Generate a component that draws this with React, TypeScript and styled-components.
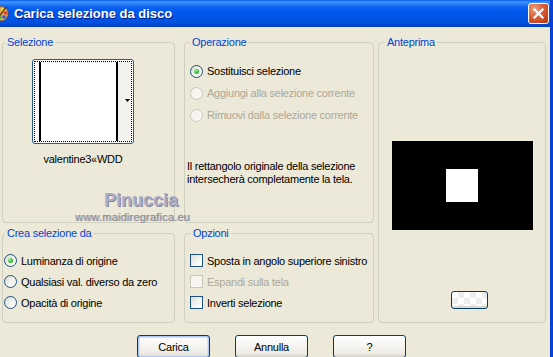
import React from 'react';
import styled, { createGlobalStyle } from 'styled-components';

const GlobalStyle = createGlobalStyle`
  html, body { margin: 0; padding: 0; background: #ECE9D8; }
  body { font-family: "Liberation Sans", Arial, sans-serif; }
`;

const Window = styled.div`
  width: 553px;
  height: 357px;
  box-sizing: border-box;
  border-right: 3px solid #0A3FD4;
  background: #ECE9D8;
  display: flex;
  flex-direction: column;
  overflow: hidden;
  font-family: "Liberation Sans", Arial, sans-serif;
  font-size: 11px;
  letter-spacing: -0.25px;
  color: #000;
`;

const TitleBar = styled.div`
  height: 27px;
  flex: none;
  display: flex;
  align-items: center;
  padding-right: 1px;
  background: linear-gradient(
    180deg,
    #0A5BE8 0px,
    #3D95FF 2px,
    #2A7DF7 4px,
    #0E63EE 7px,
    #0058EE 11px,
    #0055E5 18px,
    #0053E0 22px,
    #0048D0 25px,
    #003CB8 27px
  );
`;

const AppIcon = styled.svg`
  width: 16px;
  height: 18px;
  margin-left: -7px;
  flex: none;
`;

const Title = styled.span`
  flex: 1;
  margin-left: 5px;
  color: #fff;
  font: bold 13px "Liberation Sans", Arial, sans-serif;
  letter-spacing: 0;
  text-shadow: 1px 1px 0 #0A1D8A;
`;

const CloseButton = styled.div`
  width: 21px;
  height: 21px;
  box-sizing: border-box;
  border: 1px solid #fff;
  border-radius: 3px;
  background: radial-gradient(circle at 30% 25%, #F0A080 0%, #E06A42 35%, #C8431D 75%, #B0350F 100%);
  display: flex;
  align-items: center;
  justify-content: center;
`;

const Body = styled.div`
  position: relative;
  flex: 1;
  padding: 9px 0 0 2px;
  display: flex;
  flex-direction: column;
`;

const Panels = styled.div`
  display: grid;
  grid-template-columns: 173px 9px 190px 4px 168px;
  grid-template-rows: 187px 96px;
  row-gap: 4px;
  grid-template-areas:
    "sel . op . prev"
    "crea . opz . prev";
`;

const GroupBox = styled.fieldset<{ $area: string }>`
  grid-area: ${p => p.$area};
  margin: 0;
  padding: 0;
  min-width: 0;
  box-sizing: border-box;
  border: 1px solid #D0D0BF;
  border-radius: 4px;
`;

const Legend = styled.legend<{ $indent: number }>`
  margin-left: ${p => p.$indent}px;
  padding: 0 2px;
  color: #0046D5;
  font-size: 11px;
  line-height: 13px;
`;

const SelectionContent = styled.div`
  padding: 10px 0 0 29px;
`;

const ThumbColumn = styled.div`
  width: 102px;
  display: flex;
  flex-direction: column;
  align-items: center;
  gap: 9px;
`;

const Thumb = styled.div`
  width: 102px;
  height: 85px;
  box-sizing: border-box;
  border: 1px solid #2A5C8F;
  border-radius: 3px;
  padding: 1px;
  background: #fff;
`;

const ThumbFocus = styled.div`
  height: 100%;
  box-sizing: border-box;
  border: 1px dotted #000;
  display: flex;
`;

const ThumbCaption = styled.span`
  line-height: 13px;
  white-space: nowrap;
`;

const OptionList = styled.div<{ $top: number; $left: number }>`
  padding: ${p => p.$top}px 0 0 ${p => p.$left}px;
  display: flex;
  flex-direction: column;
`;

const OptionRow = styled.div<{ $disabled?: boolean; $height: number }>`
  height: ${p => p.$height}px;
  display: flex;
  align-items: center;
  gap: 4px;
  white-space: nowrap;
  color: ${p => (p.$disabled ? '#ACA899' : '#000')};
`;

const RadioMark = styled.span<{ $checked?: boolean; $disabled?: boolean }>`
  width: 13px;
  height: 13px;
  flex: none;
  box-sizing: border-box;
  border-radius: 50%;
  border: 1px solid ${p => (p.$disabled ? '#CAC8BB' : '#1C5180')};
  background: ${p =>
    p.$disabled ? '#F6F5EF' : 'linear-gradient(135deg, #DCDCD7 0%, #F4F4F0 55%, #FFFFFF 100%)'};
  display: flex;
  align-items: center;
  justify-content: center;
  &::after {
    content: ${p => (p.$checked ? "''" : 'none')};
    width: 5px;
    height: 5px;
    border-radius: 50%;
    background: radial-gradient(circle at 35% 35%, #A6F0A2 0%, #3FC03B 50%, #21A121 100%);
  }
`;

const CheckMark = styled.span<{ $disabled?: boolean }>`
  width: 13px;
  height: 13px;
  flex: none;
  box-sizing: border-box;
  border: 1px solid ${p => (p.$disabled ? '#CAC8BB' : '#1C5180')};
  background: ${p =>
    p.$disabled ? '#F6F5EF' : 'linear-gradient(135deg, #DCDCD7 0%, #F4F4F0 55%, #FFFFFF 100%)'};
`;

const Note = styled.p`
  margin: 34px 0 0 2px;
  line-height: 13px;
  white-space: nowrap;
`;

const PreviewContent = styled.div`
  padding-top: 92px;
  display: flex;
  flex-direction: column;
  align-items: center;
`;

const PreviewCanvas = styled.div`
  width: 141px;
  height: 89px;
  background: #000;
  display: flex;
  align-items: center;
  justify-content: center;
`;

const PreviewSelection = styled.div`
  width: 32px;
  height: 33px;
  background: #fff;
`;

const SmallButton = styled.div`
  margin: 61px 0 0 15px;
  width: 37px;
  height: 18px;
  box-sizing: border-box;
  border: 1px solid #003C74;
  border-radius: 3px;
  background:
    repeating-conic-gradient(#EDEDED 0% 25%, #FFFFFF 0% 50%) 0 0 / 12px 12px;
  box-shadow: inset 0 -2px 0 #DCD8CC;
`;

const ButtonRow = styled.div`
  display: flex;
  gap: 25px;
  margin-top: 12px;
  padding-left: 135px;
`;

const DialogButton = styled.button<{ $default?: boolean }>`
  width: 73px;
  height: 23px;
  flex: none;
  box-sizing: border-box;
  padding: 0;
  border: 1px solid #003C74;
  border-radius: 3px;
  background: linear-gradient(180deg, #FFFFFF 0%, #F6F5F1 45%, #ECEAE2 85%, #D6D0C5 100%);
  font: 11px "Liberation Sans", Arial, sans-serif;
  letter-spacing: -0.25px;
  color: #000;
  box-shadow: ${p =>
    p.$default ? 'inset 0 0 0 1px #B0C8F2, inset 0 0 0 2px #D2E0F8' : 'none'};
`;

const Watermark = styled.div`
  position: absolute;
  left: 75px;
  top: 164px;
  display: flex;
  flex-direction: column;
  pointer-events: none;
`;

const WatermarkName = styled.span`
  margin-left: 29px;
  font: bold 18px "Liberation Sans", Arial, sans-serif;
  line-height: 18px;
  letter-spacing: 0;
  color: #ADADC6;
  text-shadow: 1px 1px 0 #84849C;
`;

const WatermarkUrl = styled.span`
  margin-top: 3px;
  font: 11px "Liberation Sans", Arial, sans-serif;
  line-height: 11px;
  letter-spacing: 0.2px;
  color: #8E8E96;
  text-shadow: 1px 0 0 #B4B4BC;
`;

type Option = { label: string; checked?: boolean; disabled?: boolean };

const operations: Option[] = [
  { label: 'Sostituisci selezione', checked: true },
  { label: 'Aggiungi alla selezione corrente', disabled: true },
  { label: 'Rimuovi dalla selezione corrente', disabled: true },
];

const sources: Option[] = [
  { label: 'Luminanza di origine', checked: true },
  { label: 'Qualsiasi val. diverso da zero' },
  { label: 'Opacità di origine' },
];

const options: Option[] = [
  { label: 'Sposta in angolo superiore sinistro' },
  { label: 'Espandi sulla tela', disabled: true },
  { label: 'Inverti selezione' },
];

export default function App() {
  return (
    <>
      <GlobalStyle />
      <Window>
        <TitleBar>
          <AppIcon viewBox="0 0 16 18">
            <path d="M2 4 C6 0 14 1 15 7 C16 12 12 16 8 16 C5 16 6 13 4 13 C1 13 -1 8 2 4 Z" fill="#E2A94E" stroke="#7A4A1C" strokeWidth="0.8" />
            <circle cx="10" cy="4.5" r="1.8" fill="#F5E02A" />
            <circle cx="12.5" cy="8" r="1.8" fill="#E23A3A" />
            <circle cx="11" cy="12" r="1.8" fill="#2D5BE0" />
            <circle cx="7" cy="12.5" r="1.5" fill="#3FAE3A" />
            <path d="M3 16 L13 2" stroke="#5A3414" strokeWidth="1.4" />
          </AppIcon>
          <Title>Carica selezione da disco</Title>
          <CloseButton>
            <svg width="13" height="13" viewBox="0 0 13 13">
              <path d="M2.5 2.5 L10.5 10.5 M10.5 2.5 L2.5 10.5" stroke="#fff" strokeWidth="2.2" strokeLinecap="square" />
            </svg>
          </CloseButton>
        </TitleBar>
        <Body>
          <Panels>
            <GroupBox $area="sel">
              <Legend $indent={2}>Selezione</Legend>
              <SelectionContent>
                <ThumbColumn>
                  <Thumb>
                    <ThumbFocus>
                      <svg width="96" height="79" viewBox="0 0 96 79">
                        <rect x="0" y="0" width="96" height="79" fill="#fff" />
                        <rect x="4" y="0" width="2" height="79" fill="#000" />
                        <rect x="81" y="0" width="2" height="79" fill="#000" />
                        <rect x="83" y="0" width="13" height="79" fill="#F3F2EC" />
                        <path d="M90 37 L95 37 L92.5 40 Z" fill="#000" />
                      </svg>
                    </ThumbFocus>
                  </Thumb>
                  <ThumbCaption>valentine3«WDD</ThumbCaption>
                </ThumbColumn>
              </SelectionContent>
            </GroupBox>

            <GroupBox $area="op">
              <Legend $indent={5}>Operazione</Legend>
              <OptionList $top={11} $left={5}>
                {operations.map(o => (
                  <OptionRow key={o.label} $height={22} $disabled={o.disabled}>
                    <RadioMark $checked={o.checked} $disabled={o.disabled} />
                    {o.label}
                  </OptionRow>
                ))}
              </OptionList>
              <Note>
                Il rettangolo originale della selezione
                <br />
                intersecherà completamente la tela.
              </Note>
            </GroupBox>

            <GroupBox $area="prev">
              <Legend $indent={6}>Anteprima</Legend>
              <PreviewContent>
                <PreviewCanvas>
                  <PreviewSelection />
                </PreviewCanvas>
                <SmallButton />
              </PreviewContent>
            </GroupBox>

            <GroupBox $area="crea">
              <Legend $indent={2}>Crea selezione da</Legend>
              <OptionList $top={10} $left={1}>
                {sources.map(o => (
                  <OptionRow key={o.label} $height={21} $disabled={o.disabled}>
                    <RadioMark $checked={o.checked} $disabled={o.disabled} />
                    {o.label}
                  </OptionRow>
                ))}
              </OptionList>
            </GroupBox>

            <GroupBox $area="opz">
              <Legend $indent={6}>Opzioni</Legend>
              <OptionList $top={10} $left={5}>
                {options.map(o => (
                  <OptionRow key={o.label} $height={21} $disabled={o.disabled}>
                    <CheckMark $disabled={o.disabled} />
                    {o.label}
                  </OptionRow>
                ))}
              </OptionList>
            </GroupBox>
          </Panels>

          <ButtonRow>
            <DialogButton $default>Carica</DialogButton>
            <DialogButton>Annulla</DialogButton>
            <DialogButton>?</DialogButton>
          </ButtonRow>

          <Watermark>
            <WatermarkName>Pinuccia</WatermarkName>
            <WatermarkUrl>www.maidiregrafica.eu</WatermarkUrl>
          </Watermark>
        </Body>
      </Window>
    </>
  );
}
